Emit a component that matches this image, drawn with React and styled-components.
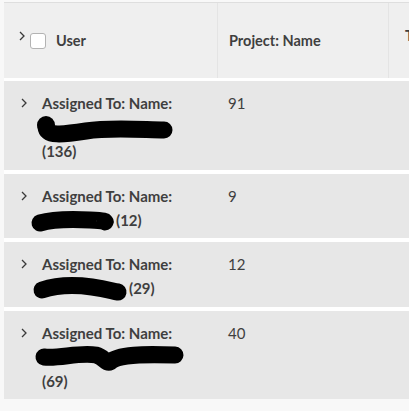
import React from "react";
import styled, { createGlobalStyle } from "styled-components";

const GlobalStyle = createGlobalStyle`
  body {
    margin: 0;
    background: #f8f8f8;
    font-family: Lato, "Open Sans", sans-serif;
    color: #3f3f3f;
  }
`;

const Page = styled.div`
  width: 409px;
  height: 411px;
  overflow: hidden;
  padding: 2px 0 0 4px;
  box-sizing: border-box;
`;

const Table = styled.div`
  width: 700px;
  display: flex;
  flex-direction: column;
  gap: 4px;
  background: #ffffff;
`;

const HeaderRow = styled.div`
  display: grid;
  grid-template-columns: 213px 171px 1fr;
  height: 76px;
  margin-bottom: -1px;
  background: #efefef;
  border-top: 1px solid #dedede;
  box-sizing: border-box;
`;

const HeaderCell = styled.div`
  display: flex;
  align-items: ${(p) => (p.top ? "flex-start" : "center")};
  padding: ${(p) => (p.top ? "24px 0 0 16px" : "0 0 0 11px")};
  border-left: 1px solid #e4e4e4;
  font-size: 14.5px;
  font-weight: 700;
  white-space: nowrap;
`;

const UserHead = styled.div`
  display: flex;
  align-items: center;
  padding-left: 14px;
  font-size: 14.5px;
  font-weight: 700;
`;

const HeadChevron = styled.span`
  display: flex;
  margin-top: -9px;
  margin-right: 4px;
`;

const Checkbox = styled.span`
  width: 14px;
  height: 14px;
  border: 1px solid #b3b3b3;
  border-radius: 3px;
  background: #ffffff;
  margin-right: 10px;
`;

const Row = styled.div`
  display: grid;
  grid-template-columns: 213px 171px 1fr;
  background: #e7e7e7;
  padding: 10px 0 6.5px;
  font-size: 15px;
  line-height: 24px;
`;

const GroupCell = styled.div`
  display: flex;
  align-items: flex-start;
  padding: 0 12px 0 16px;
`;

const ChevronBox = styled.span`
  display: flex;
  height: 24px;
  align-items: center;
  margin-right: 14px;
`;

const GroupText = styled.div`
  font-weight: 700;
  flex: 1;
`;

const Count = styled.div`
  padding-left: 11px;
`;

const Redaction = styled.svg`
  vertical-align: middle;
  overflow: visible;
  margin-left: ${(p) => p.shift}px;
`;

const Chevron = () => (
  <svg width="8" height="10" viewBox="0 0 8 10">
    <path d="M2 1 L6 5 L2 9" fill="none" stroke="#3a3a3a" strokeWidth="1.3" />
  </svg>
);

const scribbles = {
  a: { w: 140, shift: -6, d: "M10 6 C 11 15, 25 14, 50 10 S 110 9, 128 9" },
  b: { w: 86, shift: -12, d: "M10 9 C 20 6, 40 5, 60 6 S 74 8, 75 8" },
  c: { w: 97, shift: -10, d: "M10 8 C 25 3, 45 3, 60 5 S 80 9, 86 10" },
  d: { w: 152, shift: -8, d: "M10 6 C 25 8, 45 1, 62 4 C 70 6, 72 13, 76 11 C 84 3, 110 3, 141 4" },
};

const Scribble = ({ kind }) => {
  const s = scribbles[kind];
  return (
    <Redaction width={s.w} height="16" viewBox={`0 0 ${s.w} 16`} shift={s.shift}>
      <path d={s.d} fill="none" stroke="#000" strokeWidth="17" strokeLinecap="round" strokeLinejoin="round" />
      {kind === "a" && <circle cx="10" cy="4" r="9" fill="#000" />}
    </Redaction>
  );
};

const groups = [
  { kind: "a", total: 136, count: 91 },
  { kind: "b", total: 12, count: 9 },
  { kind: "c", total: 29, count: 12 },
  { kind: "d", total: 69, count: 40 },
];

export default function App() {
  return (
    <Page>
      <GlobalStyle />
      <Table>
        <HeaderRow>
          <UserHead>
            <HeadChevron>
              <Chevron />
            </HeadChevron>
            <Checkbox />
            User
          </UserHead>
          <HeaderCell>Project: Name</HeaderCell>
          <HeaderCell top>Task: Name</HeaderCell>
        </HeaderRow>
        {groups.map((g) => (
          <Row key={g.kind}>
            <GroupCell>
              <ChevronBox>
                <Chevron />
              </ChevronBox>
              <GroupText>
                Assigned To: Name: <Scribble kind={g.kind} />({g.total})
              </GroupText>
            </GroupCell>
            <Count>{g.count}</Count>
            <div />
          </Row>
        ))}
      </Table>
    </Page>
  );
}
